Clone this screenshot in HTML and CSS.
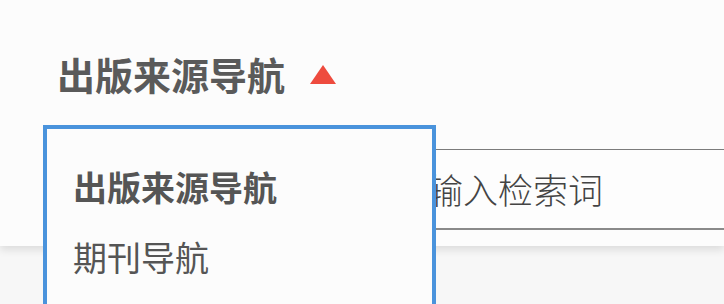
FILE: index.html
```html
<!DOCTYPE html>
<html lang="zh">
<head>
<meta charset="utf-8">
<link rel="stylesheet" href="styles.css">
</head>
<body>
<div class="panel">
  <div class="heading">
    <span class="heading-text">出版来源导航</span>
    <span class="caret"></span>
  </div>
  <div class="search-row">
    <div class="search-box">输入检索词</div>
  </div>
</div>
<div class="menu">
  <div class="menu-item active">出版来源导航</div>
  <div class="menu-item">期刊导航</div>
</div>
</body>
</html>
```
FILE: styles.css
```css
html, body {
  margin: 0;
  padding: 0;
}
body {
  width: 724px;
  height: 304px;
  overflow: hidden;
  background: #f7f7f7;
  font-family: "Noto Sans CJK SC", "Noto Sans", sans-serif;
  position: relative;
}
.panel {
  height: 246px;
  background: #fcfcfc;
  box-shadow: 0 4px 8px rgba(0, 0, 0, 0.11);
  display: flex;
  flex-direction: column;
}
.heading {
  display: flex;
  align-items: center;
  padding: 54px 0 0 57px;
  height: 40px;
}
.heading-text {
  font-size: 38px;
  line-height: 40px;
  font-weight: 700;
  color: #5a5a5a;
}
.caret {
  margin-left: 25px;
  width: 0;
  height: 0;
  border-left: 13px solid transparent;
  border-right: 13px solid transparent;
  border-bottom: 19px solid #ee4b3e;
  margin-top: 1px;
}
.search-row {
  margin-top: 55px;
  padding-left: 420px;
}
.search-box {
  height: 78px;
  width: 320px;
  border-top: 1px solid #7b7b7b;
  border-bottom: 2px solid #8a8a8a;
  border-left: 1px solid #7b7b7b;
  background: #fdfdfd;
  font-size: 35px;
  font-weight: 300;
  line-height: 78px;
  color: #444;
  padding-left: 7px;
}
.menu {
  position: absolute;
  left: 43px;
  top: 125px;
  width: 393px;
  height: 183px;
  border: 4px solid #4a93dc;
  background: #fcfcfc;
  padding: 38px 0 0 26px;
  box-sizing: border-box;
}
.menu-item {
  font-size: 34px;
  line-height: 40px;
  color: #555;
  margin-bottom: 30px;
}
.menu-item.active {
  font-weight: 700;
}
```
